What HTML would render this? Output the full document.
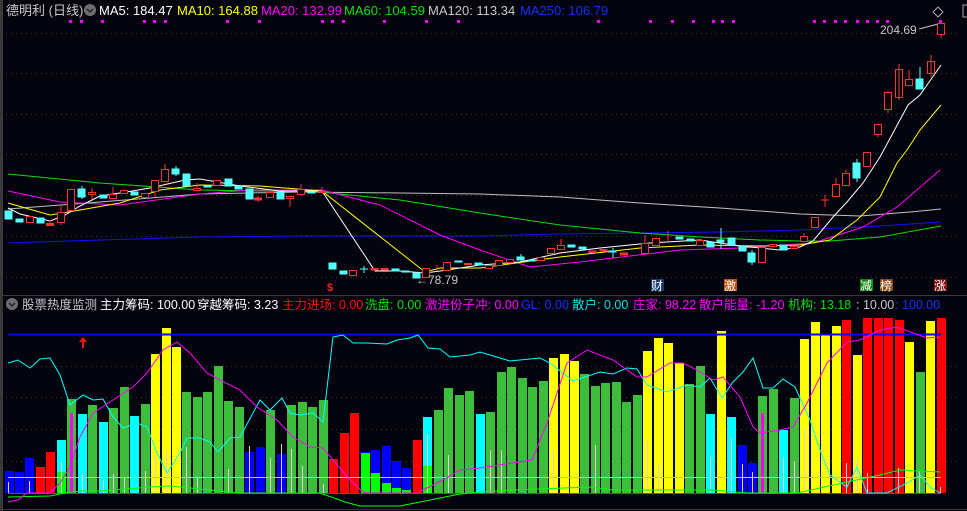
<!DOCTYPE html>
<html><head><meta charset="utf-8"><style>
html,body{margin:0;padding:0;background:#04040e;}
svg{display:block;font-family:"Liberation Sans","Noto Sans CJK SC",sans-serif;}
</style></head><body>
<svg width="967" height="511" viewBox="0 0 967 511" xmlns="http://www.w3.org/2000/svg">
<rect width="967" height="511" fill="#04040e"/>
<rect x="0" y="0" width="3" height="511" fill="#3a3a3a"/>
<line x1="0" y1="295.5" x2="967" y2="295.5" stroke="#3a3a3a"/>
<line x1="0" y1="509.5" x2="967" y2="509.5" stroke="#3a3a3a"/>
<!-- grid -->
<g stroke="#3c3c3c" stroke-dasharray="1,4">
<line x1="6" y1="33.5" x2="960" y2="33.5"/><line x1="6" y1="73.5" x2="960" y2="73.5"/><line x1="6" y1="114.5" x2="960" y2="114.5"/><line x1="6" y1="154.5" x2="960" y2="154.5"/><line x1="6" y1="195.5" x2="960" y2="195.5"/><line x1="6" y1="236.5" x2="960" y2="236.5"/><line x1="6" y1="277.5" x2="960" y2="277.5"/>
<line x1="6" y1="366.5" x2="960" y2="366.5"/><line x1="6" y1="397.5" x2="960" y2="397.5"/><line x1="6" y1="429.5" x2="960" y2="429.5"/><line x1="6" y1="461.5" x2="960" y2="461.5"/>
</g>
<!-- header -->
<g font-size="13">
<text x="6" y="15" fill="#c8c8c8">德明利 (日线)</text>
<circle cx="90" cy="10" r="6" fill="#6e6e6e"/><path d="M87 9l3 3 3-3" stroke="#222" stroke-width="1.5" fill="none"/>
<text x="99" y="15" fill="#ffffff">MA5: 184.47</text>
<text x="177" y="15" fill="#ffff00">MA10: 164.88</text>
<text x="261" y="15" fill="#ff00ff">MA20: 132.99</text>
<text x="344" y="15" fill="#00e000">MA60: 104.59</text>
<text x="428" y="15" fill="#c8c8c8">MA120: 113.34</text>
<text x="520" y="15" fill="#1030ff">MA250: 106.79</text>
</g>
<g fill="#ff00ff">
<rect x="69" y="20" width="3" height="3"/><rect x="80" y="20" width="3" height="3"/><rect x="101" y="20" width="3" height="3"/><rect x="143" y="20" width="3" height="3"/><rect x="153" y="20" width="3" height="3"/><rect x="164" y="20" width="3" height="3"/><rect x="226" y="20" width="3" height="3"/><rect x="258" y="20" width="3" height="3"/><rect x="321" y="20" width="3" height="3"/><rect x="331" y="20" width="3" height="3"/><rect x="342" y="20" width="3" height="3"/><rect x="383" y="20" width="3" height="3"/><rect x="425" y="20" width="3" height="3"/><rect x="457" y="20" width="3" height="3"/><rect x="597" y="20" width="3" height="3"/><rect x="649" y="20" width="3" height="3"/><rect x="671" y="20" width="3" height="3"/><rect x="692" y="20" width="3" height="3"/><rect x="712" y="20" width="3" height="3"/><rect x="721" y="20" width="3" height="3"/><rect x="732" y="20" width="3" height="3"/><rect x="813" y="20" width="3" height="3"/><rect x="823" y="20" width="3" height="3"/><rect x="834" y="20" width="3" height="3"/><rect x="844" y="20" width="3" height="3"/><rect x="856" y="20" width="3" height="3"/><rect x="866" y="20" width="3" height="3"/><rect x="876" y="20" width="3" height="3"/><rect x="886" y="20" width="3" height="3"/><rect x="939" y="20" width="3" height="3"/>
</g>
<path d="M938 7l5 5-5 5-5-5z" stroke="#aaa" fill="none"/>
<rect x="963" y="5" width="6" height="12" stroke="#aaa" fill="none"/>
<text x="880" y="34" font-size="12" fill="#c8c8c8">204.69</text>
<line x1="919" y1="29" x2="938" y2="24" stroke="#c8c8c8"/>
<!-- MA lines -->
<g fill="none" stroke-width="1">
<polyline stroke="#1010ff" points="8,243 100,240 200,237 300,236 400,236 480,236 560,234 640,233 720,232 800,230 880,226 941,222"/>
<polyline stroke="#c0c0c0" points="8,209 100,202 200,194 300,192 400,193 480,194 560,197 640,203 720,208 800,214 860,216 910,212 941,209"/>
<polyline stroke="#00e000" points="8,174 100,183 200,190 320,192 400,200 480,213 560,225 640,233 700,237 760,240 800,241 830,241 880,237 941,226"/>
<polyline stroke="#ff00ff" points="8,191 60,202 120,205 200,194 250,190 322,190 380,205 440,235 480,250 530,267 580,262 680,250 740,248 813,243 863,227 897,207 940,170"/>
<polyline stroke="#ffff00" points="8,203 50,215 80,210 120,203 160,190 200,185 260,186 322,191 425,272 440,268 480,268 560,257 640,248 700,245 760,246 800,245 830,240 857,220 880,197 897,163 907,150 920,130 941,105"/>
<polyline stroke="#ffffff" points="8,208 20,214 50,221 65,215 80,206 100,196 120,193 150,188 185,180 200,179 240,186 280,191 322,191 375,271 400,271 425,273 440,271 480,265 520,262 560,253 600,248 650,243 700,240 740,246 780,250 800,247 813,241 833,217 847,202 863,183 880,157 908,105 920,95 941,65"/>
</g>
<!-- candles -->
<g stroke="#ff3232" fill="#04040e">
<line x1="61" y1="205" x2="61" y2="225"/><rect x="57.5" y="212.5" width="7" height="10"/>
<rect x="67.5" y="189.5" width="7" height="21"/>
<line x1="92" y1="188" x2="92" y2="199"/><rect x="88.5" y="192.5" width="7" height="2"/>
<line x1="113" y1="187" x2="113" y2="199"/><rect x="109.5" y="194.5" width="7" height="4"/>
<rect x="120.5" y="190.5" width="7" height="3"/>
<rect x="141.5" y="193.5" width="7" height="4"/>
<line x1="155" y1="180" x2="155" y2="197"/><rect x="151.5" y="180.5" width="7" height="11"/>
<line x1="165" y1="164" x2="165" y2="182"/><rect x="161.5" y="169.5" width="7" height="12"/>
<line x1="197" y1="183" x2="197" y2="191"/><rect x="193.5" y="188.5" width="7" height="2"/>
<rect x="213.5" y="180.5" width="7" height="5"/>
<rect x="266.5" y="192.5" width="7" height="5"/>
<line x1="290" y1="196" x2="290" y2="207"/><rect x="286.5" y="196.5" width="7" height="2"/>
<line x1="301" y1="184" x2="301" y2="195"/><rect x="297.5" y="189.5" width="7" height="5"/>
<line x1="322" y1="187" x2="322" y2="193"/><rect x="318.5" y="191.5" width="7" height="1"/>
<rect x="349.5" y="270.5" width="7" height="5"/>
<rect x="422.5" y="268.5" width="7" height="9"/>
<line x1="437" y1="265" x2="437" y2="271"/>
<rect x="443.5" y="262.5" width="7" height="8"/>
<rect x="464.5" y="263.5" width="7" height="1"/>
<rect x="485.5" y="265.5" width="7" height="3"/>
<rect x="495.5" y="260.5" width="7" height="5"/>
<rect x="506.5" y="259.5" width="7" height="3"/>
<rect x="537.5" y="257.5" width="7" height="3"/>
<rect x="547.5" y="248.5" width="7" height="5"/>
<line x1="561" y1="239" x2="561" y2="249"/><rect x="557.5" y="245.5" width="7" height="4"/>
<rect x="641.5" y="243.5" width="7" height="10"/><line x1="645" y1="235" x2="645" y2="243"/>
<rect x="652.5" y="238.5" width="7" height="7"/>
<line x1="668" y1="231" x2="668" y2="242"/>
<rect x="696.5" y="240.5" width="7" height="5"/>
<rect x="758.5" y="247.5" width="7" height="15"/>
<rect x="769.5" y="244.5" width="7" height="2"/>
<rect x="790.5" y="246.5" width="7" height="2"/>
<line x1="804" y1="233" x2="804" y2="241"/><rect x="800.5" y="236.5" width="7" height="5"/>
<rect x="811.5" y="217.5" width="7" height="10"/>
<line x1="825" y1="195" x2="825" y2="207"/><line x1="821" y1="200" x2="829" y2="200"/>
<line x1="836" y1="178" x2="836" y2="196"/><rect x="832.5" y="184.5" width="7" height="12"/>
<line x1="846" y1="170" x2="846" y2="185"/><rect x="842.5" y="173.5" width="7" height="12"/>
<rect x="863.5" y="152.5" width="7" height="14"/>
<rect x="874.5" y="124.5" width="7" height="10"/><line x1="878" y1="134" x2="878" y2="137"/>
<rect x="884.5" y="92.5" width="7" height="17"/><line x1="888" y1="109" x2="888" y2="113"/>
<rect x="895.5" y="69.5" width="7" height="28"/><line x1="899" y1="64" x2="899" y2="100"/>
<rect x="905.5" y="79.5" width="7" height="6"/><line x1="909" y1="70" x2="909" y2="79"/>
<rect x="927.5" y="61.5" width="7" height="12"/><line x1="931" y1="55" x2="931" y2="77"/>
<rect x="937.5" y="23.5" width="7" height="11"/><line x1="941" y1="35" x2="941" y2="38"/>
<line x1="50" y1="220" x2="50" y2="226"/><rect x="46.5" y="223.5" width="7" height="2" fill="#ff3232"/>
<rect x="26.5" y="216.5" width="7" height="6"/>
<line x1="258" y1="196" x2="258" y2="202"/><rect x="254.5" y="198" width="7" height="2" fill="#ff3232"/>
<rect x="371" y="268.5" width="7" height="1.5" fill="#ff3232"/><rect x="381" y="268.5" width="7" height="1.5" fill="#ff3232"/>
<rect x="600" y="249.5" width="7" height="1.5" fill="#ff3232"/><rect x="589" y="251" width="7" height="1.5" fill="#ff3232"/>
<rect x="620.5" y="253" width="7" height="2" fill="#ff3232"/>
</g>
<g fill="#54ffff" stroke="#54ffff">
<rect x="5" y="211" width="7" height="8"/>
<rect x="16" y="219" width="7" height="3"/>
<rect x="37" y="218" width="7" height="5"/>
<line x1="82" y1="186" x2="82" y2="199"/><rect x="78" y="189" width="7" height="8"/>
<rect x="100" y="195" width="7" height="3"/>
<rect x="131" y="192" width="7" height="3"/>
<line x1="176" y1="166" x2="176" y2="176"/><rect x="172" y="169" width="7" height="5"/>
<rect x="183" y="174" width="7" height="12"/>
<rect x="204" y="186" width="7" height="1"/>
<rect x="225" y="179" width="7" height="7"/>
<rect x="235" y="186" width="7" height="3"/>
<rect x="246" y="189" width="7" height="10"/>
<rect x="277" y="192" width="7" height="7"/>
<rect x="308" y="192" width="7" height="1"/>
<rect x="329" y="263" width="7" height="6"/>
<rect x="340" y="271" width="7" height="3"/>
<line x1="364" y1="266" x2="364" y2="273"/><line x1="360" y1="269" x2="368" y2="269"/>
<rect x="392" y="269" width="7" height="2"/>
<rect x="402" y="271" width="7" height="1"/>
<rect x="413" y="273" width="7" height="5"/>
<rect x="455" y="261" width="7" height="1"/>
<rect x="475" y="263" width="7" height="2"/>
<line x1="521" y1="254" x2="521" y2="262"/><rect x="517" y="257" width="7" height="3"/>
<rect x="528" y="260" width="7" height="1"/>
<rect x="568" y="245" width="7" height="2"/>
<rect x="579" y="247" width="7" height="2"/>
<line x1="613" y1="248" x2="613" y2="258"/><rect x="609" y="251" width="7" height="1"/>
<rect x="676" y="237" width="7" height="2"/>
<rect x="687" y="239" width="7" height="2"/>
<rect x="707" y="242" width="7" height="5"/>
<line x1="721" y1="228" x2="721" y2="249"/><rect x="717" y="240" width="7" height="2"/>
<rect x="728" y="238" width="7" height="7"/>
<rect x="739" y="246" width="7" height="5"/>
<line x1="752" y1="250" x2="752" y2="265"/><rect x="748" y="253" width="7" height="9"/>
<rect x="780" y="245" width="7" height="5"/>
<line x1="857" y1="159" x2="857" y2="182"/><rect x="853" y="163" width="7" height="15"/>
<line x1="920" y1="67" x2="920" y2="79"/><rect x="916" y="79" width="7" height="10"/>
</g>
<!-- low label -->
<text x="416" y="284" font-size="12" fill="#c8c8c8">←78.79</text>
<!-- markers -->
<text x="327" y="291" font-size="11" fill="#ff2020" font-weight="bold">$</text>
<rect x="651" y="279" width="13" height="12" fill="#1a3a6a"/><text x="651" y="290" font-size="12" fill="#fff">财</text>
<rect x="724" y="279" width="13" height="12" fill="#c05010"/><text x="724" y="290" font-size="12" fill="#fff">激</text>
<rect x="860" y="279" width="13" height="12" fill="#108a10"/><text x="860" y="290" font-size="12" fill="#fff">减</text>
<rect x="880" y="279" width="13" height="12" fill="#8a4a10"/><text x="880" y="290" font-size="12" fill="#fff">榜</text>
<rect x="934" y="279" width="13" height="12" fill="#801010"/><text x="934" y="290" font-size="12" fill="#fff">涨</text>
<!-- lower header -->
<g font-size="12.5">
<circle cx="12" cy="304" r="6" fill="#6e6e6e"/><path d="M9 303l3 3 3-3" stroke="#222" stroke-width="1.5" fill="none"/>
<text x="22" y="309" fill="#c8c8c8">股票热度监测</text>
<text x="100" y="309" fill="#ffffff">主力筹码: 100.00</text>
<text x="197" y="309" fill="#ffffff">穿越筹码: 3.23</text>
<text x="282" y="309" fill="#ff1010">主力进场: 0.00</text>
<text x="365" y="309" fill="#00e000">洗盘: 0.00</text>
<text x="425" y="309" fill="#ff00ff">激进份子冲: 0.00</text>
<text x="521" y="309" fill="#1030ff">GL: 0.00</text>
<text x="572" y="309" fill="#00e0e0">散户: 0.00</text>
<text x="633" y="309" fill="#ff00ff">庄家: 98.22</text>
<text x="699" y="309" fill="#ff00ff">散户能量: -1.20</text>
<text x="788" y="309" fill="#00e000">机构: 13.18</text>
<text x="856" y="309" fill="#c8c8c8">: 10.00</text>
<text x="895" y="309" fill="#1030ff">: 100.00</text>
</g>
<!-- bars -->
<g>
<rect x="5" y="471" width="9" height="22" fill="#0000ff"/>
<rect x="15" y="472" width="9" height="21" fill="#0000ff"/>
<rect x="25" y="458" width="9" height="35" fill="#0000ff"/>
<rect x="36" y="467" width="9" height="26" fill="#ff0000"/>
<rect x="46" y="452" width="9" height="41" fill="#ff0000"/>
<rect x="57" y="440" width="9" height="53" fill="#00ffff"/><rect x="57" y="472" width="9" height="21" fill="#00ff00"/>
<rect x="67" y="399" width="9" height="94" fill="#3cbe3c"/>
<rect x="78" y="414" width="9" height="79" fill="#00ffff"/>
<rect x="88" y="405" width="9" height="88" fill="#3cbe3c"/>
<rect x="99" y="422" width="9" height="71" fill="#00ffff"/>
<rect x="109" y="408" width="9" height="85" fill="#3cbe3c"/>
<rect x="120" y="387" width="9" height="106" fill="#3cbe3c"/>
<rect x="130" y="416" width="9" height="77" fill="#00ffff"/>
<rect x="141" y="404" width="9" height="89" fill="#3cbe3c"/>
<rect x="151" y="354" width="9" height="139" fill="#ffff00"/>
<rect x="162" y="328" width="9" height="165" fill="#ffff00"/>
<rect x="172" y="347" width="9" height="146" fill="#ffff00"/>
<rect x="182" y="392" width="9" height="101" fill="#3cbe3c"/>
<rect x="193" y="397" width="9" height="96" fill="#3cbe3c"/>
<rect x="203" y="392" width="9" height="101" fill="#3cbe3c"/>
<rect x="214" y="366" width="9" height="127" fill="#3cbe3c"/>
<rect x="224" y="401" width="9" height="92" fill="#3cbe3c"/>
<rect x="235" y="407" width="9" height="86" fill="#3cbe3c"/>
<rect x="245" y="452" width="9" height="41" fill="#0000ff"/>
<rect x="256" y="447" width="9" height="46" fill="#0000ff"/>
<rect x="266" y="410" width="9" height="83" fill="#3cbe3c"/>
<rect x="277" y="454" width="9" height="39" fill="#0000ff"/>
<rect x="287" y="405" width="9" height="88" fill="#3cbe3c"/>
<rect x="298" y="402" width="9" height="91" fill="#3cbe3c"/>
<rect x="308" y="407" width="9" height="86" fill="#3cbe3c"/>
<rect x="319" y="400" width="9" height="93" fill="#3cbe3c"/>
<rect x="329" y="459" width="9" height="34" fill="#ff0000"/>
<rect x="340" y="433" width="9" height="60" fill="#ff0000"/>
<rect x="350" y="413" width="9" height="80" fill="#ff0000"/>
<rect x="361" y="452" width="9" height="41" fill="#0000ff"/><rect x="361" y="453" width="9" height="40" fill="#00ff00"/>
<rect x="371" y="450" width="9" height="43" fill="#0000ff"/><rect x="371" y="473" width="9" height="20" fill="#00ff00"/>
<rect x="382" y="446" width="9" height="47" fill="#0000ff"/><rect x="382" y="483" width="9" height="10" fill="#00ff00"/>
<rect x="392" y="461" width="9" height="32" fill="#0000ff"/><rect x="392" y="488" width="9" height="5" fill="#00ff00"/>
<rect x="402" y="468" width="9" height="25" fill="#0000ff"/><rect x="402" y="490" width="9" height="3" fill="#00ff00"/>
<rect x="413" y="440" width="9" height="53" fill="#ff0000"/>
<rect x="423" y="417" width="9" height="76" fill="#00ffff"/><rect x="423" y="466" width="9" height="27" fill="#00ff00"/>
<rect x="434" y="410" width="9" height="83" fill="#3cbe3c"/>
<rect x="444" y="388" width="9" height="105" fill="#3cbe3c"/>
<rect x="455" y="395" width="9" height="98" fill="#3cbe3c"/>
<rect x="465" y="391" width="9" height="102" fill="#3cbe3c"/>
<rect x="476" y="414" width="9" height="79" fill="#00ffff"/>
<rect x="486" y="412" width="9" height="81" fill="#3cbe3c"/>
<rect x="497" y="372" width="9" height="121" fill="#3cbe3c"/>
<rect x="507" y="367" width="9" height="126" fill="#3cbe3c"/>
<rect x="518" y="378" width="9" height="115" fill="#3cbe3c"/>
<rect x="528" y="387" width="9" height="106" fill="#3cbe3c"/>
<rect x="539" y="381" width="9" height="112" fill="#3cbe3c"/>
<rect x="549" y="358" width="9" height="135" fill="#ffff00"/>
<rect x="560" y="354" width="9" height="139" fill="#ffff00"/>
<rect x="570" y="361" width="9" height="132" fill="#ffff00"/>
<rect x="580" y="374" width="9" height="119" fill="#3cbe3c"/>
<rect x="591" y="386" width="9" height="107" fill="#3cbe3c"/>
<rect x="601" y="383" width="9" height="110" fill="#3cbe3c"/>
<rect x="612" y="382" width="9" height="111" fill="#3cbe3c"/>
<rect x="622" y="402" width="9" height="91" fill="#3cbe3c"/>
<rect x="633" y="395" width="9" height="98" fill="#3cbe3c"/>
<rect x="643" y="351" width="9" height="142" fill="#ffff00"/>
<rect x="654" y="338" width="9" height="155" fill="#ffff00"/>
<rect x="664" y="343" width="9" height="150" fill="#ffff00"/>
<rect x="675" y="363" width="9" height="130" fill="#ffff00"/>
<rect x="685" y="384" width="9" height="109" fill="#3cbe3c"/>
<rect x="696" y="366" width="9" height="127" fill="#3cbe3c"/>
<rect x="706" y="414" width="9" height="79" fill="#00ffff"/>
<rect x="717" y="331" width="9" height="162" fill="#ffff00"/>
<rect x="727" y="417" width="9" height="76" fill="#00ffff"/>
<rect x="738" y="445" width="9" height="48" fill="#0000ff"/>
<rect x="748" y="463" width="9" height="30" fill="#0000ff"/>
<rect x="758" y="396" width="9" height="97" fill="#3cbe3c"/>
<rect x="769" y="389" width="9" height="104" fill="#3cbe3c"/>
<rect x="779" y="430" width="9" height="63" fill="#00ffff"/>
<rect x="790" y="398" width="9" height="95" fill="#3cbe3c"/>
<rect x="800" y="339" width="9" height="154" fill="#ffff00"/>
<rect x="811" y="322" width="9" height="171" fill="#ffff00"/>
<rect x="821" y="334" width="9" height="159" fill="#ffff00"/>
<rect x="832" y="326" width="9" height="167" fill="#ffff00"/>
<rect x="842" y="320" width="9" height="173" fill="#ff0000"/>
<rect x="853" y="355" width="9" height="138" fill="#ffff00"/>
<rect x="863" y="318" width="9" height="175" fill="#ff0000"/>
<rect x="874" y="318" width="9" height="175" fill="#ff0000"/>
<rect x="884" y="318" width="9" height="175" fill="#ff0000"/>
<rect x="895" y="320" width="9" height="173" fill="#ff0000"/>
<rect x="905" y="342" width="9" height="151" fill="#ffff00"/>
<rect x="916" y="372" width="9" height="121" fill="#3cbe3c"/>
<rect x="926" y="321" width="9" height="172" fill="#ffff00"/>
<rect x="937" y="318" width="9" height="175" fill="#ff0000"/>
<rect x="70" y="413" width="3" height="80" fill="#ff00ff"/>
<rect x="761" y="413" width="3" height="80" fill="#ff00ff"/>
</g>
<!-- thin pale bars -->
<g stroke="#f0c8d0" stroke-width="1">
<line x1="8.5" y1="482" x2="8.5" y2="493"/><line x1="29.5" y1="481" x2="29.5" y2="493"/><line x1="61.5" y1="462" x2="61.5" y2="493"/><line x1="82.5" y1="474" x2="82.5" y2="493"/><line x1="103.5" y1="481" x2="103.5" y2="493"/><line x1="113.5" y1="474" x2="113.5" y2="493"/><line x1="124.5" y1="478" x2="124.5" y2="493"/><line x1="145.5" y1="471" x2="145.5" y2="493"/><line x1="155.5" y1="455" x2="155.5" y2="493"/><line x1="166.5" y1="450" x2="166.5" y2="493"/><line x1="186.5" y1="447" x2="186.5" y2="493"/><line x1="197.5" y1="478" x2="197.5" y2="493"/><line x1="228.5" y1="469" x2="228.5" y2="493"/><line x1="249.5" y1="446" x2="249.5" y2="493"/><line x1="270.5" y1="458" x2="270.5" y2="493"/><line x1="281.5" y1="444" x2="281.5" y2="493"/><line x1="291.5" y1="449" x2="291.5" y2="493"/><line x1="302.5" y1="466" x2="302.5" y2="493"/><line x1="323.5" y1="484" x2="323.5" y2="493"/><line x1="427.5" y1="434" x2="427.5" y2="493"/><line x1="448.5" y1="455" x2="448.5" y2="493"/><line x1="490.5" y1="450" x2="490.5" y2="493"/><line x1="501.5" y1="450" x2="501.5" y2="493"/><line x1="553.5" y1="450" x2="553.5" y2="493"/><line x1="595.5" y1="445" x2="595.5" y2="493"/><line x1="647.5" y1="441" x2="647.5" y2="493"/><line x1="658.5" y1="464" x2="658.5" y2="493"/><line x1="710.5" y1="456" x2="710.5" y2="493"/><line x1="731.5" y1="438" x2="731.5" y2="493"/><line x1="742.5" y1="464" x2="742.5" y2="493"/><line x1="752.5" y1="472" x2="752.5" y2="493"/><line x1="783.5" y1="457" x2="783.5" y2="493"/><line x1="794.5" y1="461" x2="794.5" y2="493"/><line x1="804.5" y1="427" x2="804.5" y2="493"/><line x1="846.5" y1="463" x2="846.5" y2="493"/><line x1="857.5" y1="458" x2="857.5" y2="493"/><line x1="867.5" y1="473" x2="867.5" y2="493"/><line x1="898.5" y1="468" x2="898.5" y2="493"/><line x1="919.5" y1="471" x2="919.5" y2="493"/><line x1="940.5" y1="487" x2="940.5" y2="493"/>
</g>
<!-- lower lines -->
<line x1="8" y1="334.5" x2="941" y2="334.5" stroke="#0000ff" stroke-width="2"/>
<line x1="8" y1="477.5" x2="941" y2="477.5" stroke="#c0c0c0"/>
<line x1="8" y1="493.5" x2="941" y2="493.5" stroke="#a020a0"/>
<polygon points="83,337 79,342 82,342 82,348 84,348 84,342 87,342" fill="#ff1010"/>
<g fill="none">
<polyline stroke="#00ff00" points="8,497 50,496 65,493 80,491 100,491 150,487 170,486 200,489 240,493 320,493 345,502 360,506 400,506 430,500 460,494 480,492 513,490 590,487 613,490 713,490 747,493 797,493 847,482 880,475 900,470 940,472"/>
<polyline stroke="#00ffff" points="8,363 18,360 30,368 40,359 50,358 60,375 70,405 83,395 93,400 103,399 113,417 123,428 137,423 147,427 157,453 167,473 180,453 187,438 200,438 210,442 218,452 230,438 240,437 260,400 270,410 282,398 290,413 300,415 313,413 323,422 333,337 343,335 353,343 367,343 387,344 397,340 410,338 418,335 428,348 440,349 450,357 470,355 480,352 510,361 540,358 550,363 573,381 600,372 613,374 627,368 637,369 647,385 667,392 687,385 700,387 710,378 722,398 733,382 743,372 753,358 763,388 773,388 783,379 795,387 810,420 820,450 830,475 847,487 857,467 867,493 887,493 907,483 920,475 930,487 940,493"/>
<polyline stroke="#ff00ff" points="8,502 18,500 27,493 50,493 60,483 70,467 80,437 93,413 113,400 133,387 147,373 163,350 177,342 190,353 207,373 220,380 240,390 257,407 277,420 293,437 310,447 323,448 333,460 350,480 363,492 367,493 417,493 443,480 460,470 480,468 532,460 547,423 567,363 587,350 613,360 637,377 647,377 670,363 683,363 697,370 713,380 723,377 740,397 753,427 760,433 780,430 793,427 807,403 827,363 847,342 860,340 880,330 897,327 913,333 927,338 940,337"/>
</g>
</svg>
</body></html>
